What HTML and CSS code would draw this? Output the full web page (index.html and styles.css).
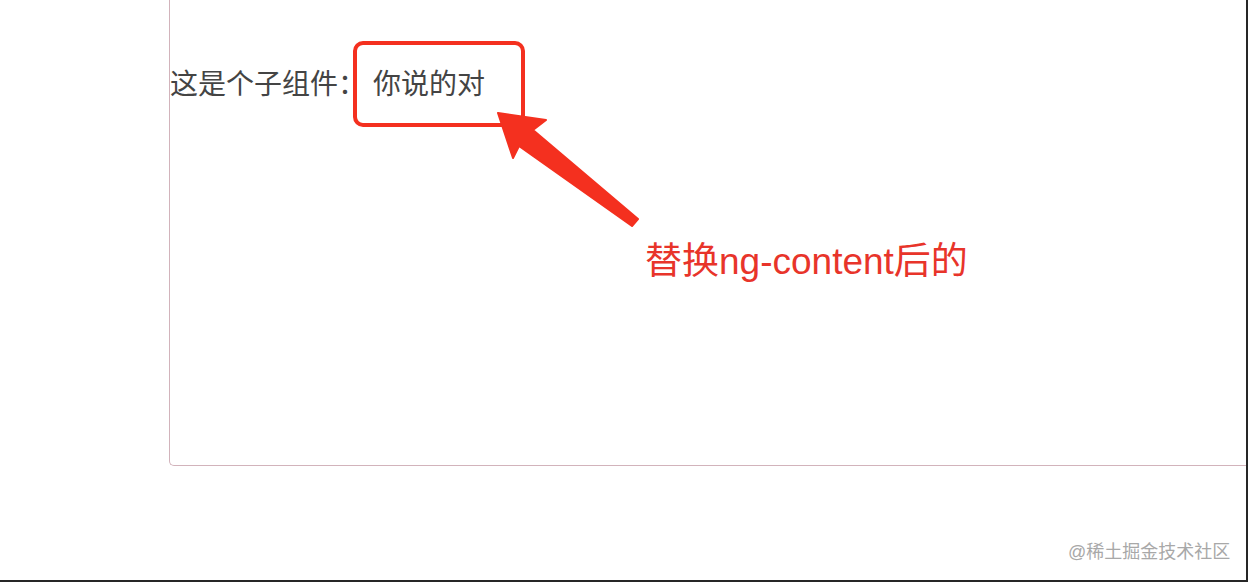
FILE: index.html
```html
<!DOCTYPE html>
<html lang="zh-CN">
<head>
<meta charset="utf-8">
<title>ng-content</title>
<link rel="stylesheet" href="styles.css">
</head>
<body>
<div class="page">
  <div class="frame">
    <p class="line">这是个子组件：<span class="slot">你说的对</span></p>
  </div>
  <div class="highlight"></div>
  <svg class="arrow" width="1246" height="580" viewBox="0 0 1246 580">
    <polygon points="498,113 546,120 533,130 638,219 632,226 519,146 513,158" fill="#f4301f" stroke="#f4301f" stroke-width="2" stroke-linejoin="round"/>
  </svg>
  <div class="note">替换ng-content后的</div>
  <div class="watermark">@稀土掘金技术社区</div>
</div>
</body>
</html>
```

FILE: styles.css
```css
html, body {
  margin: 0;
  padding: 0;
  background: #ffffff;
}

.page {
  position: relative;
  width: 1246px;
  height: 580px;
  border-right: 2px solid #262626;
  border-bottom: 2px solid #262626;
  overflow: hidden;
  font-family: "Liberation Sans", "Noto Sans CJK SC", sans-serif;
}

.frame {
  margin-left: 169px;
  height: 466px;
  border-left: 1px solid #d2b3bb;
  border-bottom: 1px solid #d2b3bb;
  border-bottom-left-radius: 5px;
  box-sizing: border-box;
  padding-top: 65px;
}

.line {
  margin: 0;
  font-size: 28px;
  line-height: 40px;
  color: #444444;
}

.slot {
  margin-left: 7px;
}

.highlight {
  position: absolute;
  left: 353px;
  top: 41px;
  width: 172px;
  height: 86px;
  box-sizing: border-box;
  border: 4px solid #f4301f;
  border-radius: 10px;
}

.arrow {
  position: absolute;
  left: 0;
  top: 0;
}

.note {
  position: absolute;
  left: 645px;
  top: 243px;
  font-size: 37px;
  line-height: 1;
  color: #e8342a;
  white-space: nowrap;
}

.watermark {
  position: absolute;
  left: 1068px;
  top: 543px;
  font-size: 18px;
  line-height: 1;
  color: #a8a8a8;
  white-space: nowrap;
}
```
